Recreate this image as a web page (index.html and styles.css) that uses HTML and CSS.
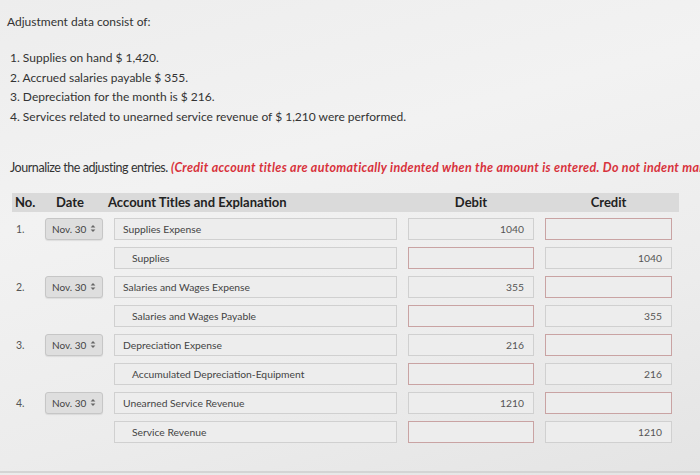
FILE: index.html
```html
<!DOCTYPE html>
<html>
<head>
<meta charset="utf-8">
<link rel="stylesheet" href="styles.css">
</head>
<body>
<div class="page">
  <p class="title">Adjustment data consist of:</p>
  <ol class="facts">
    <li>1. Supplies on hand $ 1,420.</li>
    <li>2. Accrued salaries payable $ 355.</li>
    <li>3. Depreciation for the month is $ 216.</li>
    <li>4. Services related to unearned service revenue of $ 1,210 were performed.</li>
  </ol>
  <p class="instr"><span class="lead">Journalize the adjusting entries.</span> <span class="note">(Credit account titles are automatically indented when the amount is entered. Do not indent manually.)</span></p>

  <div class="journal">
    <div class="grid head">
      <span class="h-no">No.</span>
      <span class="h-date">Date</span>
      <span class="h-acct">Account Titles and Explanation</span>
      <span class="h-num">Debit</span>
      <span class="h-num">Credit</span>
    </div>

    <div class="grid row">
      <span class="no">1.</span>
      <div class="select"><span>Nov. 30</span><svg width="6" height="9" viewBox="0 0 6 9"><path d="M0.6 3.6 L3 0.9 L5.4 3.6Z M0.6 5.4 L3 8.1 L5.4 5.4Z" fill="#666"/></svg></div>
      <div class="field">Supplies Expense</div>
      <div class="field num">1040</div>
      <div class="field empty"></div>
    </div>
    <div class="grid row">
      <span class="no"></span>
      <span></span>
      <div class="field credit">Supplies</div>
      <div class="field empty"></div>
      <div class="field num">1040</div>
    </div>

    <div class="grid row">
      <span class="no">2.</span>
      <div class="select"><span>Nov. 30</span><svg width="6" height="9" viewBox="0 0 6 9"><path d="M0.6 3.6 L3 0.9 L5.4 3.6Z M0.6 5.4 L3 8.1 L5.4 5.4Z" fill="#666"/></svg></div>
      <div class="field">Salaries and Wages Expense</div>
      <div class="field num">355</div>
      <div class="field empty"></div>
    </div>
    <div class="grid row">
      <span class="no"></span>
      <span></span>
      <div class="field credit">Salaries and Wages Payable</div>
      <div class="field empty"></div>
      <div class="field num">355</div>
    </div>

    <div class="grid row">
      <span class="no">3.</span>
      <div class="select"><span>Nov. 30</span><svg width="6" height="9" viewBox="0 0 6 9"><path d="M0.6 3.6 L3 0.9 L5.4 3.6Z M0.6 5.4 L3 8.1 L5.4 5.4Z" fill="#666"/></svg></div>
      <div class="field">Depreciation Expense</div>
      <div class="field num">216</div>
      <div class="field empty"></div>
    </div>
    <div class="grid row">
      <span class="no"></span>
      <span></span>
      <div class="field credit">Accumulated Depreciation-Equipment</div>
      <div class="field empty"></div>
      <div class="field num">216</div>
    </div>

    <div class="grid row">
      <span class="no">4.</span>
      <div class="select"><span>Nov. 30</span><svg width="6" height="9" viewBox="0 0 6 9"><path d="M0.6 3.6 L3 0.9 L5.4 3.6Z M0.6 5.4 L3 8.1 L5.4 5.4Z" fill="#666"/></svg></div>
      <div class="field">Unearned Service Revenue</div>
      <div class="field num">1210</div>
      <div class="field empty"></div>
    </div>
    <div class="grid row">
      <span class="no"></span>
      <span></span>
      <div class="field credit">Service Revenue</div>
      <div class="field empty"></div>
      <div class="field num">1210</div>
    </div>
  </div>
</div>
</body>
</html>
```

FILE: styles.css
```css
html, body {
  margin: 0;
  padding: 0;
}
body {
  width: 700px;
  height: 475px;
  overflow: hidden;
  font-family: Lato, "Open Sans", sans-serif;
  color: #333;
  background: linear-gradient(165deg, #ededed 0%, #f2f2f2 35%, #ececec 70%, #e4e4e4 100%);
}
.page {
  padding: 14px 0 0 7px;
  height: 457px;
  border-bottom: 2px solid #d4d4d4;
}
.title {
  margin: 0;
  font-size: 12px;
  line-height: 16px;
}
.facts {
  list-style: none;
  margin: 18px 0 0 3px;
  padding: 0;
  font-size: 12px;
  line-height: 19.7px;
}
.instr {
  margin: 33px 0 0 3px;
  font-size: 12.5px;
  line-height: 16px;
  white-space: nowrap;
}
.lead {
  letter-spacing: -0.45px;
}
.note {
  color: #d8323c;
  font-style: italic;
  font-weight: bold;
  letter-spacing: 0.3px;
}
.journal {
  margin: 17px 0 0 5px;
}
.grid {
  display: grid;
  grid-template-columns: 22px 58px 283px 126px 127px;
  column-gap: 11px;
  align-items: center;
}
.head {
  width: 660px;
  padding-right: 7px;
  height: 19px;
  background: #dadada;
  font-weight: bold;
  font-size: 13px;
  color: #222;
}
.h-no { padding-left: 3px; }
.h-date { padding-left: 11px; }
.h-acct { margin-left: -6px; white-space: nowrap; }
.h-num { text-align: center; }
.row {
  height: 22px;
  margin-top: 6px;
}
.row + .row {
  margin-top: 7px;
}
.no {
  padding-left: 4px;
  font-size: 10.5px;
  color: #555;
}
.select {
  height: 22px;
  box-sizing: border-box;
  border: 1px solid #c6c6c6;
  border-radius: 3px;
  background: #dedede;
  box-shadow: 0 1px 1px rgba(0,0,0,0.08);
  display: flex;
  align-items: center;
  justify-content: space-between;
  padding: 0 6px 0 6px;
  font-size: 10px;
  color: #444;
}
.field {
  height: 22px;
  box-sizing: border-box;
  border: 1px solid #d0d0d0;
  background: #ededed;
  display: flex;
  align-items: center;
  padding: 0 8px;
  font-size: 10.3px;
  color: #444;
  white-space: nowrap;
}
.credit {
  padding-left: 17px;
}
.num {
  justify-content: flex-end;
  padding-right: 9px;
  color: #555;
}
.empty {
  border-color: #c9a3a3;
}
```
